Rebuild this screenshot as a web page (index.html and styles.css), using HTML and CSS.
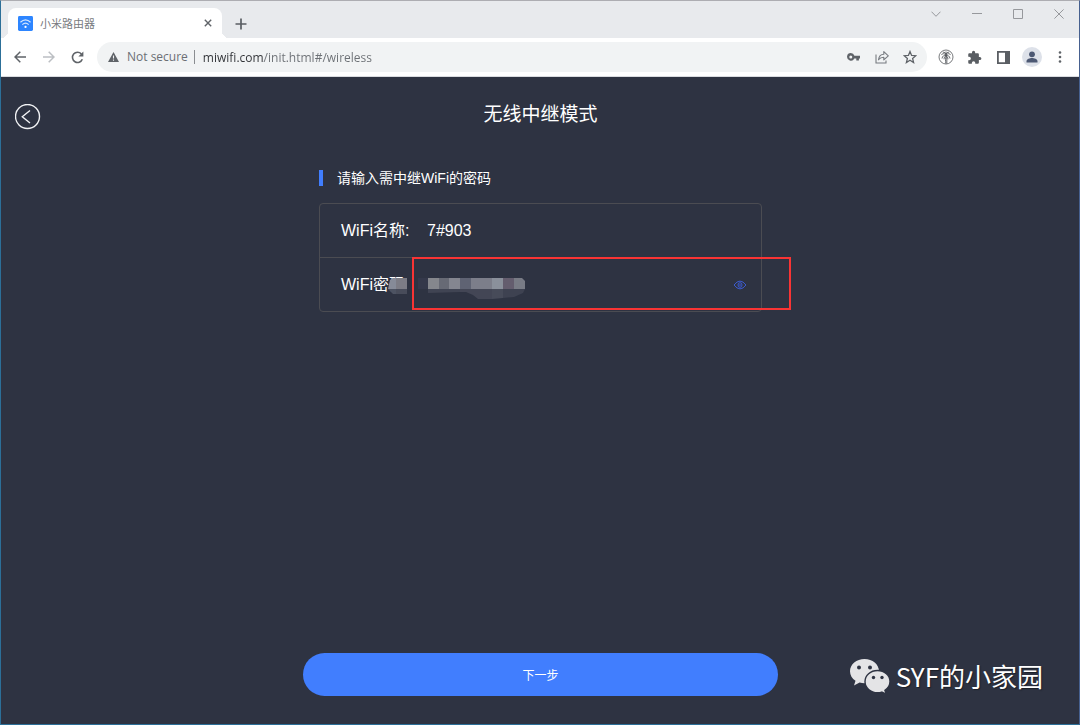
FILE: index.html
```html
<!DOCTYPE html>
<html lang="zh-CN">
<head>
    <meta charset="UTF-8">
    <meta name="viewport" content="width=device-width, initial-scale=1.0">
    <title>小米路由器</title>
    <link rel="stylesheet" href="styles.css">
</head>
<body>
    <div class="window">
        <header class="tab-strip">
            <div class="tab">
                <svg class="favicon" viewBox="0 0 16 16" width="15" height="15">
                    <rect width="16" height="16" rx="1.5" fill="#2d85ff"/>
                    <path d="M2.6 6.6Q8 1.6 13.4 6.6M4.6 9.2Q8 6 11.4 9.2" fill="none" stroke="#d5e7ff" stroke-width="1.3"/>
                    <circle cx="8" cy="11.6" r="1.2" fill="#fff"/>
                </svg>
                <span class="tab-title">小米路由器</span>
                <button class="icon-btn tab-close" type="button" aria-label="Close tab">
                    <svg viewBox="0 0 8 8" width="8" height="8"><path d="M.8.8l6.4 6.4M7.2.8L.8 7.2" stroke="#5f6368" stroke-width="1.4"/></svg>
                </button>
            </div>
            <button class="icon-btn new-tab" type="button" aria-label="New tab">
                <svg viewBox="0 0 12 12" width="12" height="12"><path d="M6 .5v11M.5 6h11" stroke="#5a5e63" stroke-width="1.7"/></svg>
            </button>
            <div class="window-controls">
                <button class="icon-btn" type="button" aria-label="Search tabs">
                    <svg viewBox="0 0 10 10" width="10" height="10"><path d="M.5 2.7L5 7.3l4.5-4.6"/></svg>
                </button>
                <button class="icon-btn" type="button" aria-label="Minimize">
                    <svg viewBox="0 0 10 10" width="10" height="10"><path d="M0 4.5h10"/></svg>
                </button>
                <button class="icon-btn" type="button" aria-label="Maximize">
                    <svg viewBox="0 0 10 10" width="10" height="10"><path d="M.5.5h9v9h-9z"/></svg>
                </button>
                <button class="icon-btn" type="button" aria-label="Close">
                    <svg viewBox="0 0 10 10" width="10" height="10"><path d="M.4.4l9.2 9.2M9.6.4L.4 9.6"/></svg>
                </button>
            </div>
        </header>

        <div class="toolbar">
            <div class="nav-buttons">
                <button class="icon-btn" type="button" aria-label="Back">
                    <svg viewBox="0 0 12 12" width="12" height="12"><path d="M12 6H1.2M6.3.7L1 6l5.3 5.3" fill="none" stroke="#5f6368" stroke-width="1.5"/></svg>
                </button>
                <button class="icon-btn" type="button" aria-label="Forward" disabled>
                    <svg viewBox="0 0 12 12" width="12" height="12"><path d="M0 6h10.8M5.7.7L11 6l-5.3 5.3" fill="none" stroke="#bcbfc3" stroke-width="1.5"/></svg>
                </button>
                <button class="icon-btn" type="button" aria-label="Reload">
                    <svg viewBox="0 0 13 13" width="13" height="13">
                        <path d="M11.3 8.2A5.1 5.1 0 1 1 10.4 3" fill="none" stroke="#5f6368" stroke-width="1.6"/>
                        <path d="M12.4.5v5H7.4z" fill="#5f6368"/>
                    </svg>
                </button>
            </div>
            <div class="omnibox">
                <svg viewBox="0 0 11 10" width="11" height="10">
                    <path d="M5.5 0L11 10H0z" fill="#5f6368"/>
                    <path d="M5.5 3.4v3.2M5.5 7.5v1.2" stroke="#f1f3f4" stroke-width="1.1"/>
                </svg>
                <label class="security" for="address">Not secure</label>
                <input class="address" id="address" type="text" value="miwifi.com/init.html#/wireless">
                <div class="omnibox-buttons">
                    <button class="icon-btn" type="button" aria-label="Passwords">
                        <svg viewBox="0 0 13 8" width="13" height="8">
                            <path fill-rule="evenodd" d="M3.8 0A3.8 3.8 0 0 1 7.4 2.7H13v2.7h-1.1V7.6H9.3V5.4H7.3A3.8 3.8 0 1 1 3.8 0zM3.8 2.4a1.5 1.5 0 1 0 0 3 1.5 1.5 0 0 0 0-3z" fill="#5f6368"/>
                        </svg>
                    </button>
                    <button class="icon-btn" type="button" aria-label="Share">
                        <svg viewBox="0 0 14 14" width="14" height="14" fill="none" stroke="#777b80" stroke-width="1.1">
                            <path d="M1 4.5v8.5h10V10.5"/>
                            <path d="M3.5 9.8C4 6 6.2 4.4 8.8 4.3V1.6L13.3 5.8 8.8 9.8V7.2C6.4 7.2 4.8 8 3.5 9.8z" stroke-linejoin="round"/>
                        </svg>
                    </button>
                    <button class="icon-btn" type="button" aria-label="Bookmark this tab">
                        <svg viewBox="0 0 14 14" width="14" height="14">
                            <path d="M7 1.5l1.6 3.9 4.2.3-3.2 2.7 1 4.1L7 10.3l-3.6 2.2 1-4.1L1.2 5.7l4.2-.3z" fill="none" stroke="#5f6368" stroke-width="1.3"/>
                        </svg>
                    </button>
                </div>
            </div>
            <div class="extensions">
                <button class="icon-btn" type="button" aria-label="Extension">
                    <svg viewBox="0 0 16 16" width="16" height="16" fill="none" stroke="#55585c">
                        <circle cx="8" cy="8" r="7" stroke-width=".8"/>
                        <path d="M8 6.5c-.6 3-.5 5-.2 8M8.6 7c.3 3 .3 5 .2 7.500M8 6.500C6.300 4 4.600 4.300 3.300 6M8 6.500C6.300 5.900 4.300 7 4 9.500M8 6.500C6.800 7.500 6 8.600 6.100 10.300M8 6.500C8 4.300 6.600 2.800 4.900 3.200M8 6.500C9.700 4 11.400 4.300 12.700 6M8 6.500c1.700-.6 3.700.5 4 3M8 6.500c1.200 1 2 2.100 1.900 3.800M8 6.500C8 4.300 9.400 2.800 11.100 3.200M8 6.500V2.500" stroke-width=".9"/>
                    </svg>
                </button>
                <button class="icon-btn" type="button" aria-label="Extensions">
                    <svg viewBox="0 0 24 24" width="15" height="15" fill="#5a5e63">
                        <path d="M20.5 11H19V7c0-1.1-.9-2-2-2h-4V3.5a2.5 2.5 0 0 0-5 0V5H4c-1.1 0-2 .9-2 2v3.8h1.5a2.7 2.7 0 0 1 0 5.4H2V20c0 1.1.9 2 2 2h3.8v-1.5a2.7 2.7 0 0 1 5.4 0V22H17c1.1 0 2-.9 2-2v-4h1.5a2.5 2.5 0 0 0 0-5z"/>
                    </svg>
                </button>
                <button class="icon-btn" type="button" aria-label="Side panel">
                    <svg viewBox="0 0 13 13" width="13" height="13">
                        <path d="M.9.9h11.2v11.2H.9z" fill="none" stroke="#5a5e63" stroke-width="1.8"/>
                        <path d="M8 1h4.5v11H8z" fill="#5a5e63"/>
                    </svg>
                </button>
                <button class="icon-btn" type="button" aria-label="Profile">
                    <svg viewBox="0 0 20 20" width="20" height="20">
                        <circle cx="10" cy="10" r="10" fill="#dde1e9"/>
                        <circle cx="10" cy="7.3" r="2.9" fill="#4c5873"/>
                        <path d="M4.5 15.5v-1.4c0-2.2 3.3-3.2 5.5-3.2s5.5 1 5.5 3.2v1.4z" fill="#4c5873"/>
                    </svg>
                </button>
                <button class="icon-btn" type="button" aria-label="Menu">
                    <svg viewBox="0 0 4 12" width="4" height="12" fill="#5f6368">
                        <circle cx="2" cy="1.5" r="1.3"/>
                        <circle cx="2" cy="6" r="1.3"/>
                        <circle cx="2" cy="10.5" r="1.3"/>
                    </svg>
                </button>
            </div>
        </div>

        <main class="page">
            <div class="page-header">
                <button class="icon-btn back" type="button" aria-label="返回">
                    <svg viewBox="0 0 26 26" width="26" height="26" fill="none" stroke="#f2f3f5" stroke-width="1.4">
                        <circle cx="12.500" cy="12.500" r="12"/>
                        <path d="M15 6.500L7.300 12.800l7.700 6.200"/>
                    </svg>
                </button>
                <h1>无线中继模式</h1>
            </div>

            <form class="wifi-form" id="wifiForm">
                <h2>请输入需中继WiFi的密码</h2>
                <div class="card">
                    <div class="row">
                        <label for="ssid">WiFi名称:</label>
                        <input type="text" id="ssid" name="ssid" value="7#903" readonly>
                    </div>
                    <div class="row">
                        <label for="password">WiFi密码:</label>
                        <input type="password" id="password" name="password">
                        <button class="icon-btn" type="button" aria-label="显示密码">
                            <svg viewBox="0 0 14 10" width="14" height="10" fill="none" stroke="#3c5bd0">
                                <path d="M1 5Q7-2.8 13 5 7 12.8 1 5z"/>
                                <ellipse cx="7" cy="5" rx="2" ry="2.3"/>
                                <path d="M7 4v2"/>
                            </svg>
                        </button>
                        <!-- mosaic over the end of the label and the password -->
                        <svg class="mosaic" viewBox="0 0 140 22" width="140" height="22">
                            <path d="M5 1h17v19H6L2 16z" fill="#2e3342"/>
                            <path d="M2 3l3-2h3v11H0z" fill="#868b98"/>
                            <path d="M8 1h11v11H8z" fill="#7c7c85"/>
                            <path d="M0 12h8v5H5z" fill="#4d5362"/>
                            <path d="M8 12h11v5H8z" fill="#484c5a"/>
                            <path d="M30 1h10v11H30z" fill="#34384a"/>
                            <path d="M40 1h11v11H40z" fill="#85878d"/>
                            <path d="M51 1h10v11H51z" fill="#676a75"/>
                            <path d="M61 1h11v11H61z" fill="#848690"/>
                            <path d="M72 1h11v11H72z" fill="#5f6373"/>
                            <path d="M83 1h21v11H83z" fill="#7c7e8a"/>
                            <path d="M104 1h11v11h-11z" fill="#8a909b"/>
                            <path d="M115 1h11v11h-11z" fill="#645d6e"/>
                            <path d="M126 1h8l3 3v8h-11z" fill="#787b85"/>
                            <path d="M40 12h32v3l-32 1z" fill="#404453"/>
                            <path d="M72 12h32v10H90l-5-4-7-3h-6z" fill="#434655"/>
                            <path d="M104 12h11v9l-11 1z" fill="#474b59"/>
                            <path d="M115 12h22l-2 4-9 4-11 1z" fill="#3e4251"/>
                        </svg>
                        <div class="highlight"></div>
                    </div>
                </div>
            </form>

            <button class="next" type="submit" form="wifiForm">下一步</button>

            <div class="watermark">
                <svg viewBox="0 0 42 36" width="42" height="36">
                    <path d="M15.5 1C7.5 1 1 6.4 1 13.2c0 4 2.1 7.3 5.5 9.5L5 27.5l5.6-2.9c1.6.4 3.2.6 4.9.6C23.5 25.2 30 20 30 13.2S23.5 1 15.5 1z" fill="#e4e4e6"/>
                    <circle cx="10" cy="9.5" r="2" fill="#2e3342"/>
                    <circle cx="21" cy="9.5" r="2" fill="#2e3342"/>
                    <path d="M28.5 12.5c-7 0-12.5 4.9-12.5 11.1s5.5 11.2 12.5 11.2c1.5 0 3-.2 4.3-.7l4.4 2-1.3-3.7c3.100-2 5.100-5.200 5.100-8.800 0-6.200-5.500-11.100-12.500-11.100z" fill="#e4e4e6" stroke="#2e3342" stroke-width="1.4"/>
                    <circle cx="24.5" cy="19.5" r="1.7" fill="#2e3342"/>
                    <circle cx="33" cy="19.5" r="1.7" fill="#2e3342"/>
                </svg>
                <span>SYF的小家园</span>
            </div>
        </main>
    </div>
</body>
</html>
```
FILE: styles.css
```css
* {
    box-sizing: border-box;
}
body {
    margin: 0;
    font-family: "Liberation Sans", "Noto Sans CJK SC", sans-serif;
}
button, input {
    font-family: inherit;
    border: none;
    background: none;
    padding: 0;
    outline: none;
}
svg {
    display: block;
    flex-shrink: 0;
}
.icon-btn {
    display: flex;
    align-items: center;
    justify-content: center;
    flex-shrink: 0;
    width: 28px;
    height: 28px;
    cursor: pointer;
}
.window {
    display: flex;
    flex-direction: column;
    min-height: 100vh;
    border: 1px solid #2c6f98;
    border-top-color: #adadb2;
    border-right-color: #46608f;
}

/* Browser bars */
.tab-strip {
    display: flex;
    align-items: flex-end;
    height: 37px;
    padding-left: 7px;
    background-color: #e8eaed;
    font-family: "Open Sans", "Noto Sans CJK SC", sans-serif;
}
.tab {
    position: relative;
    display: flex;
    align-items: center;
    width: 214px;
    height: 30px;
    padding: 0 0 0 10px;
    border-radius: 8px 8px 0 0;
    background-color: #fff;
}
.tab::before, .tab::after {
    content: "";
    position: absolute;
    bottom: 0;
    width: 7px;
    height: 7px;
}
.tab::before {
    left: -7px;
    background: radial-gradient(circle at 0 0, #e8eaed 7px, #fff 7px);
}
.tab::after {
    right: -7px;
    background: radial-gradient(circle at 100% 0, #e8eaed 7px, #fff 7px);
}
.tab-title {
    flex: 1;
    margin-left: 7px;
    font-size: 11px;
    color: #787b80;
}
.new-tab {
    margin-left: 5px;
}
.window-controls {
    display: flex;
    align-self: flex-start;
    margin-left: auto;
}
.window-controls .icon-btn {
    width: 41px;
    height: 26px;
}
.window-controls svg {
    fill: none;
    stroke: #96989c;
}
.toolbar {
    display: flex;
    align-items: center;
    height: 39px;
    padding: 0 5px;
    background-color: #fff;
    border-bottom: 1px solid #dadce0;
    font-family: "Open Sans", "Noto Sans CJK SC", sans-serif;
}
.nav-buttons, .omnibox-buttons, .extensions {
    display: flex;
    justify-content: space-between;
    flex-shrink: 0;
    width: 85px;
}
.extensions {
    width: 142px;
}
.omnibox {
    display: flex;
    align-items: center;
    flex: 1;
    height: 30px;
    margin: 0 5px 0 6px;
    padding: 0 3px 0 11px;
    border-radius: 15px;
    background-color: #f1f3f4;
    font-size: 12px;
    color: #6b6f74;
}
.security {
    margin-left: 8px;
    padding-right: 6px;
    border-right: 1px solid #8a8d91;
    line-height: 14px;
    white-space: nowrap;
}
.address {
    flex: 1;
    min-width: 0;
    margin-left: 8px;
    font-size: 12px;
    color: #6b6f74;
    /* host name is darker than the rest of the address */
    background: linear-gradient(to right, #303236 61px, #6b6f74 61px);
    -webkit-background-clip: text;
    background-clip: text;
    -webkit-text-fill-color: transparent;
}

/* Router page */
.page {
    position: relative;
    display: flex;
    flex-direction: column;
    align-items: center;
    flex: 1;
    padding: 24px 13px 28px 14px;
    background-color: #2e3342;
    color: #fff;
}
.page-header {
    display: grid;
    grid-template-columns: 26px 1fr 26px;
    width: 100%;
}
.back {
    width: 26px;
    height: 26px;
    margin-top: 3px;
}
h1 {
    margin: 0;
    font-size: 19px;
    font-weight: normal;
    line-height: 28px;
    text-align: center;
}
.wifi-form {
    width: 100%;
    max-width: 443px;
    margin-top: 40px;
}
h2 {
    margin: 0 0 17px;
    padding-left: 14px;
    border-left: 4px solid #417efe;
    font-size: 14px;
    font-weight: normal;
    line-height: 16px;
}
.card {
    border: 1px solid #4b4c52;
    border-radius: 4px;
}
.row {
    position: relative;
    display: flex;
    align-items: center;
    height: 53px;
    padding: 0 7px 0 21px;
    font-size: 16px;
}
.row + .row {
    height: 54px;
    border-top: 1px solid #4b4c52;
}
.row label {
    width: 86px;
    flex-shrink: 0;
    line-height: 18px;
}
.row input {
    flex: 1;
    min-width: 0;
    font-size: 16px;
    color: #fff;
}
.mosaic {
    position: absolute;
    left: 68px;
    top: 19px;
}
.highlight {
    position: absolute;
    left: 92px;
    right: -30px;
    top: -1px;
    bottom: 1px;
    border: 2px solid #f93434;
    pointer-events: none;
}
.next {
    width: 100%;
    max-width: 475px;
    height: 43px;
    margin-top: auto;
    border-radius: 22px;
    background-color: #417efe;
    color: #fff;
    font-size: 12px;
    cursor: pointer;
}
.watermark {
    position: absolute;
    right: 36px;
    bottom: 29px;
    display: flex;
    align-items: center;
    gap: 5px;
    font-family: "Noto Sans CJK SC", sans-serif;
    font-size: 26px;
    line-height: 38px;
    text-shadow: 1px 1px 1px #1c1f28;
}
```
